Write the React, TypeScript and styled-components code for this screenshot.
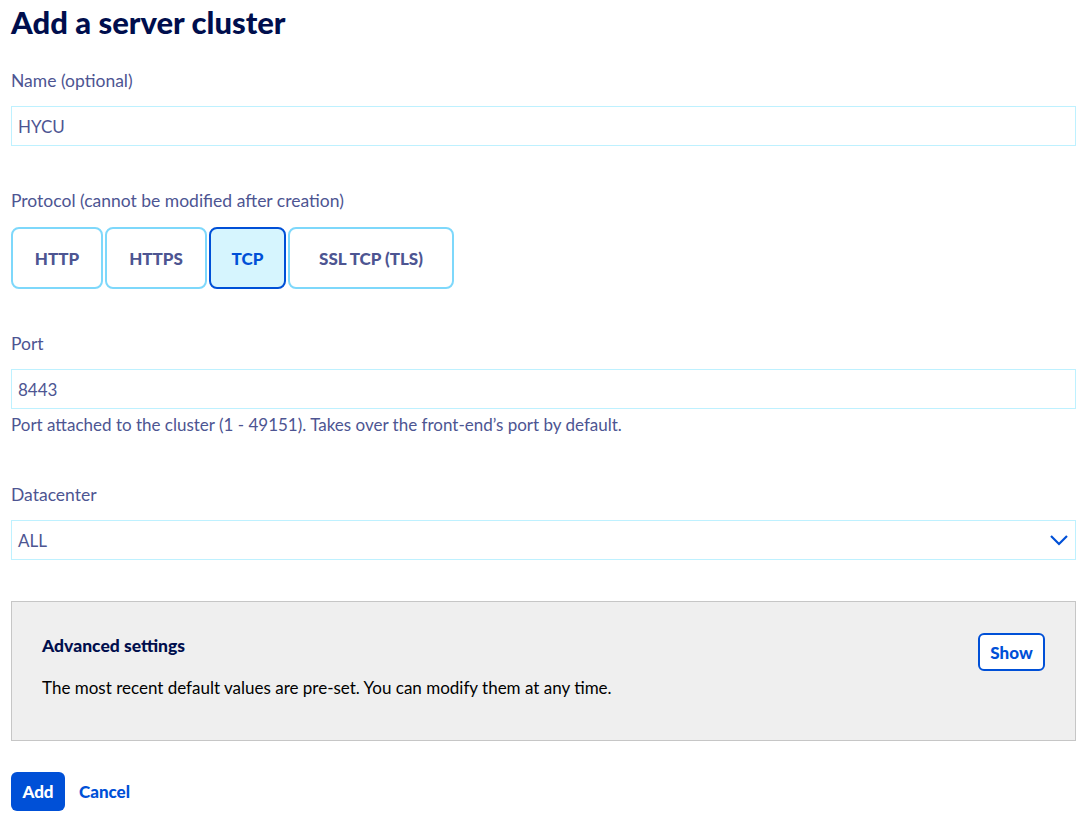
import React from "react";
import styled, { createGlobalStyle } from "styled-components";

const Global = createGlobalStyle`
  body { margin: 0; font-family: Lato, "Open Sans", sans-serif; color: #4d5592; background: #fff; }
`;
const Page = styled.div`padding: 0 12px 0 11px; display: flex; flex-direction: column;`;
const Title = styled.h1`margin: 4px 0 0; font-size: 31px; font-weight: 900; color: #000e4d; line-height: 36px;`;
const Label = styled.label<{ top: number }>`display: block; margin-top: ${p => p.top}px; font-size: 17.5px; line-height: 22px; color: #4d5592;`;
const Input = styled.div`margin-top: 14px; height: 38px; border: 1px solid #bef1ff; display: flex; align-items: center; padding: 0 6px; font-size: 17px; color: #4d5592; justify-content: space-between;`;
const Help = styled.div`margin-top: 5px; font-size: 17px; line-height: 22px;`;
const Tiles = styled.div`display: flex; gap: 2px; margin-top: 15px;`;
const Tile = styled.button<{ active?: boolean; w: number }>`
  width: ${p => p.w}px; height: 62px; border-radius: 8px; font-family: inherit; font-weight: 900; font-size: 17px;
  border: 2px solid ${p => (p.active ? "#0050d7" : "#7ed8fb")};
  background: ${p => (p.active ? "#d6f5fe" : "#fff")};
  color: ${p => (p.active ? "#0050d7" : "#4d5592")};
`;
const Box = styled.div`margin-top: 41px; height: 140px; box-sizing: border-box; background: #efefef; border: 1px solid #c6c6c6; padding: 31px 30px 0 30px;`;
const BoxHead = styled.div`display: flex; justify-content: space-between; align-items: flex-start;`;
const BoxTitle = styled.div`font-weight: 900; font-size: 17.5px; color: #000e4d; margin-top: 2px;`;
const ShowBtn = styled.button`height: 38px; width: 67px; border: 2px solid #0050d7; border-radius: 6px; background: #fff; color: #0050d7; font-family: inherit; font-weight: 900; font-size: 17px;`;
const BoxText = styled.div`margin-top: 6px; font-size: 17px; color: #000;`;
const Actions = styled.div`display: flex; align-items: center; gap: 14px; margin-top: 31px;`;
const AddBtn = styled.button`height: 39px; width: 54px; border: none; border-radius: 6px; background: #0050d7; color: #fff; font-family: inherit; font-weight: 900; font-size: 17px;`;
const Link = styled.span`color: #0050d7; font-weight: 900; font-size: 17px;`;

export default function App() {
  return (
    <Page>
      <Global />
      <Title>Add a server cluster</Title>
      <Label top={30}>Name (optional)</Label>
      <Input>HYCU</Input>
      <Label top={44}>Protocol (cannot be modified after creation)</Label>
      <Tiles>
        <Tile w={92}>HTTP</Tile>
        <Tile w={102}>HTTPS</Tile>
        <Tile w={77} active>TCP</Tile>
        <Tile w={166}>SSL TCP (TLS)</Tile>
      </Tiles>
      <Label top={44}>Port</Label>
      <Input>8443</Input>
      <Help>Port attached to the cluster (1 - 49151). Takes over the front-end’s port by default.</Help>
      <Label top={48}>Datacenter</Label>
      <Input>
        ALL
        <svg width="20" height="12" viewBox="0 0 20 12"><path d="M2 2l8 8 8-8" fill="none" stroke="#0050d7" strokeWidth="2.2" /></svg>
      </Input>
      <Box>
        <BoxHead>
          <BoxTitle>Advanced settings</BoxTitle>
          <ShowBtn>Show</ShowBtn>
        </BoxHead>
        <BoxText>The most recent default values are pre-set. You can modify them at any time.</BoxText>
      </Box>
      <Actions>
        <AddBtn>Add</AddBtn>
        <Link>Cancel</Link>
      </Actions>
    </Page>
  );
}
